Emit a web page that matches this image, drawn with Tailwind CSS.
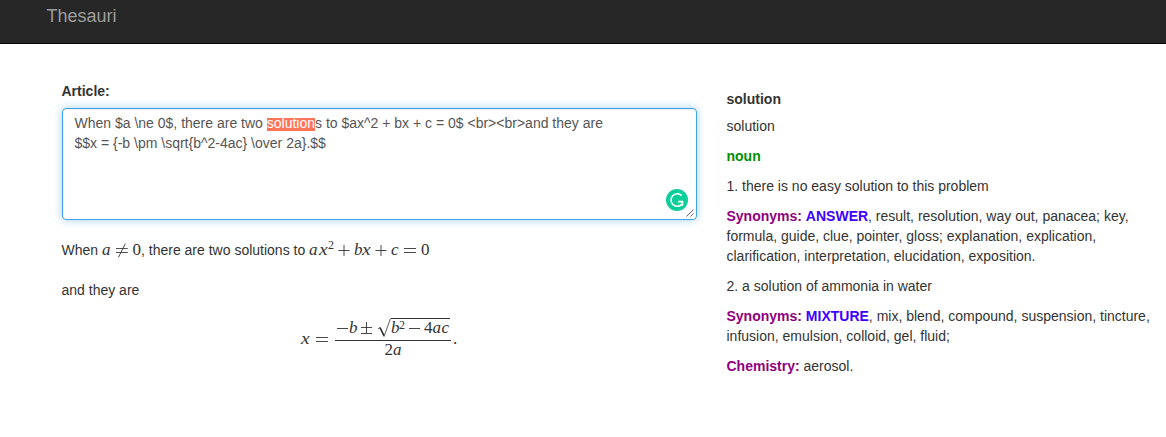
<!DOCTYPE html>
<html lang="en">
<head>
<meta charset="utf-8">
<title>Thesauri</title>
<script src="https://cdn.jsdelivr.net/npm/@tailwindcss/browser@4"></script>
</head>
<body class="h-[437px] overflow-hidden bg-white font-['Liberation_Sans',Arial,sans-serif] text-sm leading-5 text-[#333]">
<nav class="h-11 border-b border-[#090909] bg-[#272727] pl-[46.5px] pt-1.5 text-lg leading-5 text-[#9d9d9d]">Thesauri</nav>
<main class="flex">
  <section class="w-[697px] shrink-0 pl-[61.5px] pt-[37px]">
    <label class="block font-bold">Article:</label>
    <div class="relative mt-[7px] h-28 w-[635px] rounded border border-[#3da2e7] pl-3 pt-1 text-[#555] shadow-[inset_0_1px_1px_rgba(0,0,0,.075),0_0_8px_rgba(102,175,233,.6)]">
      <p class="whitespace-nowrap">When $a \ne 0$, there are two <span class="inline-block h-[13px] bg-[#ff7458] leading-[11px] text-white">solution</span>s to $ax^2 + bx + c = 0$ &lt;br&gt;&lt;br&gt;and they are<br>$$x = {-b \pm \sqrt{b^2-4ac} \over 2a}.$$</p>
      <svg class="absolute bottom-2 right-2 size-[22px]" viewBox="0 0 22 22"><circle cx="11" cy="11" r="11" fill="#0cce9b"/><path d="M15.8 6.6A6.3 6.3 0 1 0 15.6 15.6" fill="none" stroke="#fff" stroke-width="1.6"/><path d="M12.2 12.6h4.2v4.2" fill="none" stroke="#fff" stroke-width="1.7"/></svg>
      <svg class="absolute bottom-0.5 right-0.5 size-2" viewBox="0 0 8 8"><path d="M0.5 7.5l7-7M4.5 7.5l3-3" stroke="#444" stroke-width=".8" fill="none"/></svg>
    </div>
    <p class="mt-5 flex h-5 whitespace-nowrap">
      <span class="w-[40.5px]">When</span>
      <span class="flex w-[39px] font-['Liberation_Serif',serif] text-[17px]">
        <i class="w-[13px]">a</i><svg class="mt-[3px] h-4 w-[14px]" viewBox="0 0 14 16"><path d="M1 5.5h12M1 9.5h12M10.5 0.5L3.5 14.5" stroke="#333" stroke-width=".9" fill="none"/></svg><span class="ml-[4px]">0</span>
      </span>
      <span class="w-[168px]">, there are two solutions to</span>
      <span class="flex font-['Liberation_Serif',serif] text-[17px]">
        <i class="w-[9.5px]">a</i><i class="w-[9.5px] origin-left scale-x-115">x</i><span class="-mt-[5px] w-[10px] text-xs leading-5">2</span><svg class="mt-1 h-3 w-3" viewBox="0 0 12 12"><path d="M.5 6.5h11M6 1v11" stroke="#333" stroke-width=".9"/></svg><i class="ml-1 w-[8px]">b</i><i class="w-[13px] origin-left scale-x-115">x</i><svg class="mt-1 h-3 w-3" viewBox="0 0 12 12"><path d="M.5 6.5h11M6 1v11" stroke="#333" stroke-width=".9"/></svg><i class="ml-1 w-[12px]">c</i><svg class="mt-[3px] h-4 w-[14px]" viewBox="0 0 14 16"><path d="M1 5.5h12M1 9.5h12" stroke="#333" stroke-width=".9"/></svg><span class="ml-[4px]">0</span>
      </span>
    </p>
    <p class="mt-5">and they are</p>
    <div class="ml-[239px] mt-[17px] flex h-[42px] font-['Liberation_Serif',serif] text-[17px] leading-5">
      <i class="mt-[12px] w-[14.5px] origin-left scale-x-115">x</i><svg class="mt-[15px] h-4 w-[14px]" viewBox="0 0 14 16"><path d="M1 5.5h12M1 9.5h12" stroke="#333" stroke-width=".9"/></svg>
      <div class="ml-[6px] w-[116px]">
        <div class="flex h-[24px] border-b border-[#333] pl-px">
          <svg class="h-4 w-[13px]" viewBox="0 0 13 16"><path d="M1 11.5h11" stroke="#333" stroke-width=".9"/></svg><i class="mt-px w-[11px]">b</i><svg class="mt-[5px] h-[13px] w-[13px]" viewBox="0 0 13 13"><path d="M1 5.5h11M6.5 0v11M1 11.5h11" stroke="#333" stroke-width=".9"/></svg><svg class="ml-1 mt-px h-[20px] w-[14px]" viewBox="0 0 14 20"><path d="M1 11L3 9.5L7 18.5L13.5.5" fill="none" stroke="#333" stroke-width=".8"/><path d="M3 9.7l4 8" stroke="#333" stroke-width="1.6"/></svg>
          <span class="mt-px flex h-5 w-[59px] border-t border-[#333]"><i class="-mt-px w-[8px]">b</i><span class="-mt-[4px] w-[9px] text-xs leading-5">2</span><svg class="h-4 w-[13px]" viewBox="0 0 13 16"><path d="M1 9.5h11" stroke="#333" stroke-width=".9"/></svg><span class="-mt-px ml-[3px] w-[8.5px]">4</span><i class="-mt-px w-[9px]">a</i><i class="-mt-px">c</i></span>
        </div>
        <div class="-mt-px text-center">2<i>a</i></div>
      </div>
      <span class="ml-[2px] mt-[12px]">.</span>
    </div>
  </section>
  <aside class="flex flex-col gap-2.5 whitespace-nowrap pl-[29.5px] pt-[45px]">
    <p class="-mb-[3px] font-bold">solution</p>
    <p>solution</p>
    <p class="font-bold text-[#008f00]">noun</p>
    <p>1. there is no easy solution to this problem</p>
    <p><b class="text-[#8f0080]">Synonyms:</b> <b class="text-[#3d00ff]">ANSWER</b>, result, resolution, way out, panacea; key,<br>formula, guide, clue, pointer, gloss; explanation, explication,<br>clarification, interpretation, elucidation, exposition.</p>
    <p>2. a solution of ammonia in water</p>
    <p><b class="text-[#8f0080]">Synonyms:</b> <b class="text-[#3d00ff]">MIXTURE</b>, mix, blend, compound, suspension, tincture,<br>infusion, emulsion, colloid, gel, fluid;</p>
    <p><b class="text-[#8f0080]">Chemistry:</b> aerosol.</p>
  </aside>
</main>
</body>
</html>
